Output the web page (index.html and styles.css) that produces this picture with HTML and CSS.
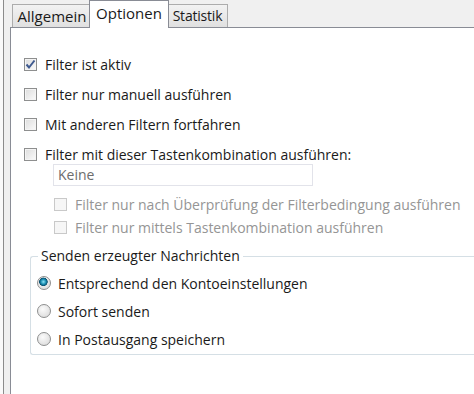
FILE: index.html
```html
<!DOCTYPE html>
<html lang="de">
<head>
    <meta charset="UTF-8">
    <meta name="viewport" content="width=device-width, initial-scale=1.0">
    <title>Filteroptionen</title>
    <link rel="stylesheet" href="styles.css">
</head>
<body>
    <div class="window">
        <div class="edge"></div>
        <div class="dialog">
            <div class="tabs">
                <div class="tab tab-general">Allgemein</div>
                <div class="tab tab-options active">Optionen</div>
                <div class="tab tab-stats">Statistik</div>
            </div>
            <div class="panel">
                <label class="row">
                    <span class="check checked">
                        <svg width="11" height="11" viewBox="0 0 11 11"><path d="M1.5 5.5 L4 8.5 L9.5 1.5" fill="none" stroke="#3f5a8f" stroke-width="2"/></svg>
                    </span>
                    Filter ist aktiv
                </label>
                <label class="row">
                    <span class="check"></span>
                    Filter nur manuell ausführen
                </label>
                <label class="row">
                    <span class="check"></span>
                    Mit anderen Filtern fortfahren
                </label>
                <label class="row">
                    <span class="check"></span>
                    Filter mit dieser Tastenkombination ausführen:
                </label>

                <div class="hotkey">Keine</div>

                <label class="row sub first">
                    <span class="check disabled"></span>
                    Filter nur nach Überprüfung der Filterbedingung ausführen
                </label>
                <label class="row sub">
                    <span class="check disabled"></span>
                    Filter nur mittels Tastenkombination ausführen
                </label>

                <fieldset class="group">
                    <legend>Senden erzeugter Nachrichten</legend>
                    <label class="row radio-row">
                        <span class="radio selected"></span>
                        Entsprechend den Kontoeinstellungen
                    </label>
                    <label class="row radio-row">
                        <span class="radio"></span>
                        Sofort senden
                    </label>
                    <label class="row radio-row">
                        <span class="radio"></span>
                        In Postausgang speichern
                    </label>
                </fieldset>
            </div>
        </div>
    </div>
</body>
</html>
```

FILE: styles.css
```css
body {
    margin: 0;
    overflow: hidden;
    font-family: "Open Sans", "Noto Sans", sans-serif;
    font-size: 14px;
    color: #1a1a1a;
    background-color: #fff;
}

.window {
    display: flex;
    height: 394px;
}

.edge {
    width: 3px;
    border-right: 1px solid #8c8c8c;
    background-color: #fafafa;
}

.dialog {
    flex: 1;
    display: flex;
    flex-direction: column;
    padding-left: 6px;
    background-color: #f0f0f0;
}

.tabs {
    display: flex;
    align-items: flex-end;
    height: 27px;
    padding-left: 2px;
}

.tab {
    box-sizing: border-box;
    height: 23px;
    line-height: 22px;
    text-align: center;
    border: 1px solid #acacac;
    border-bottom: none;
    background: linear-gradient(#f2f2f2, #e0e0e0);
    font-size: 15px;
    margin-right: -1px;
    white-space: nowrap;
}

.tab-general {
    width: 80px;
}

.tab-options {
    width: 80px;
}

.tab-stats {
    width: 61px;
    font-size: 14px;
    letter-spacing: -0.2px;
}

.tab.active {
    position: relative;
    z-index: 1;
    height: 28px;
    line-height: 25px;
    margin: 0 -2px -1px -2px;
    border-color: #898c95;
    background: #fff;
}

.panel {
    flex: 1;
    border-top: 1px solid #898c95;
    border-left: 1px solid #898c95;
    background-color: #fff;
    padding: 27px 0 0 13px;
}

.row {
    display: flex;
    align-items: center;
    height: 18px;
    margin-bottom: 12px;
    white-space: nowrap;
}

.check {
    box-sizing: border-box;
    flex: none;
    width: 13px;
    height: 13px;
    margin-right: 8px;
    border: 1px solid #8e8f8f;
    background: linear-gradient(135deg, #dcdcdc, #fbfbfb);
    box-shadow: inset 0 0 0 1px #f4f4f4;
    display: flex;
    align-items: center;
    justify-content: center;
}

.check svg {
    display: block;
}

.check.disabled {
    border-color: #c9c9c9;
    background: #f6f6f6;
    box-shadow: none;
}

.hotkey {
    width: 254px;
    height: 20px;
    line-height: 20px;
    margin: -11px 0 0 29px;
    padding-left: 4px;
    border: 1px solid #e2e3ea;
    color: #6d6d6d;
}

.sub {
    margin: 5px 0 5px 30px;
    color: #959595;
}

.sub.first {
    margin-top: 9px;
}

.group {
    margin: 11px 0 0 6px;
    padding: 0 0 0 6px;
    border: 1px solid #d5dfe5;
    border-right: none;
    border-radius: 3px 0 0 3px;
}

.group legend {
    margin-left: 1px;
    padding: 0 3px;
    line-height: 18px;
}

.radio-row {
    margin: 0 0 10px;
}

.radio-row:first-of-type {
    margin-top: 9px;
}

.radio-row:last-child {
    margin-bottom: 6px;
}

.radio {
    box-sizing: border-box;
    flex: none;
    width: 14px;
    height: 14px;
    margin-right: 7px;
    border-radius: 50%;
    border: 1px solid #8e8f8f;
    background: radial-gradient(circle at 40% 35%, #fbfbfb, #d6d6d6);
}

.radio.selected {
    background:
        radial-gradient(circle at 45% 40%, #8fe3f5 0, #1a8fb3 2.5px, #0b4f6e 4px, transparent 4.5px),
        radial-gradient(circle at 40% 35%, #fbfbfb, #d6d6d6);
}
```
